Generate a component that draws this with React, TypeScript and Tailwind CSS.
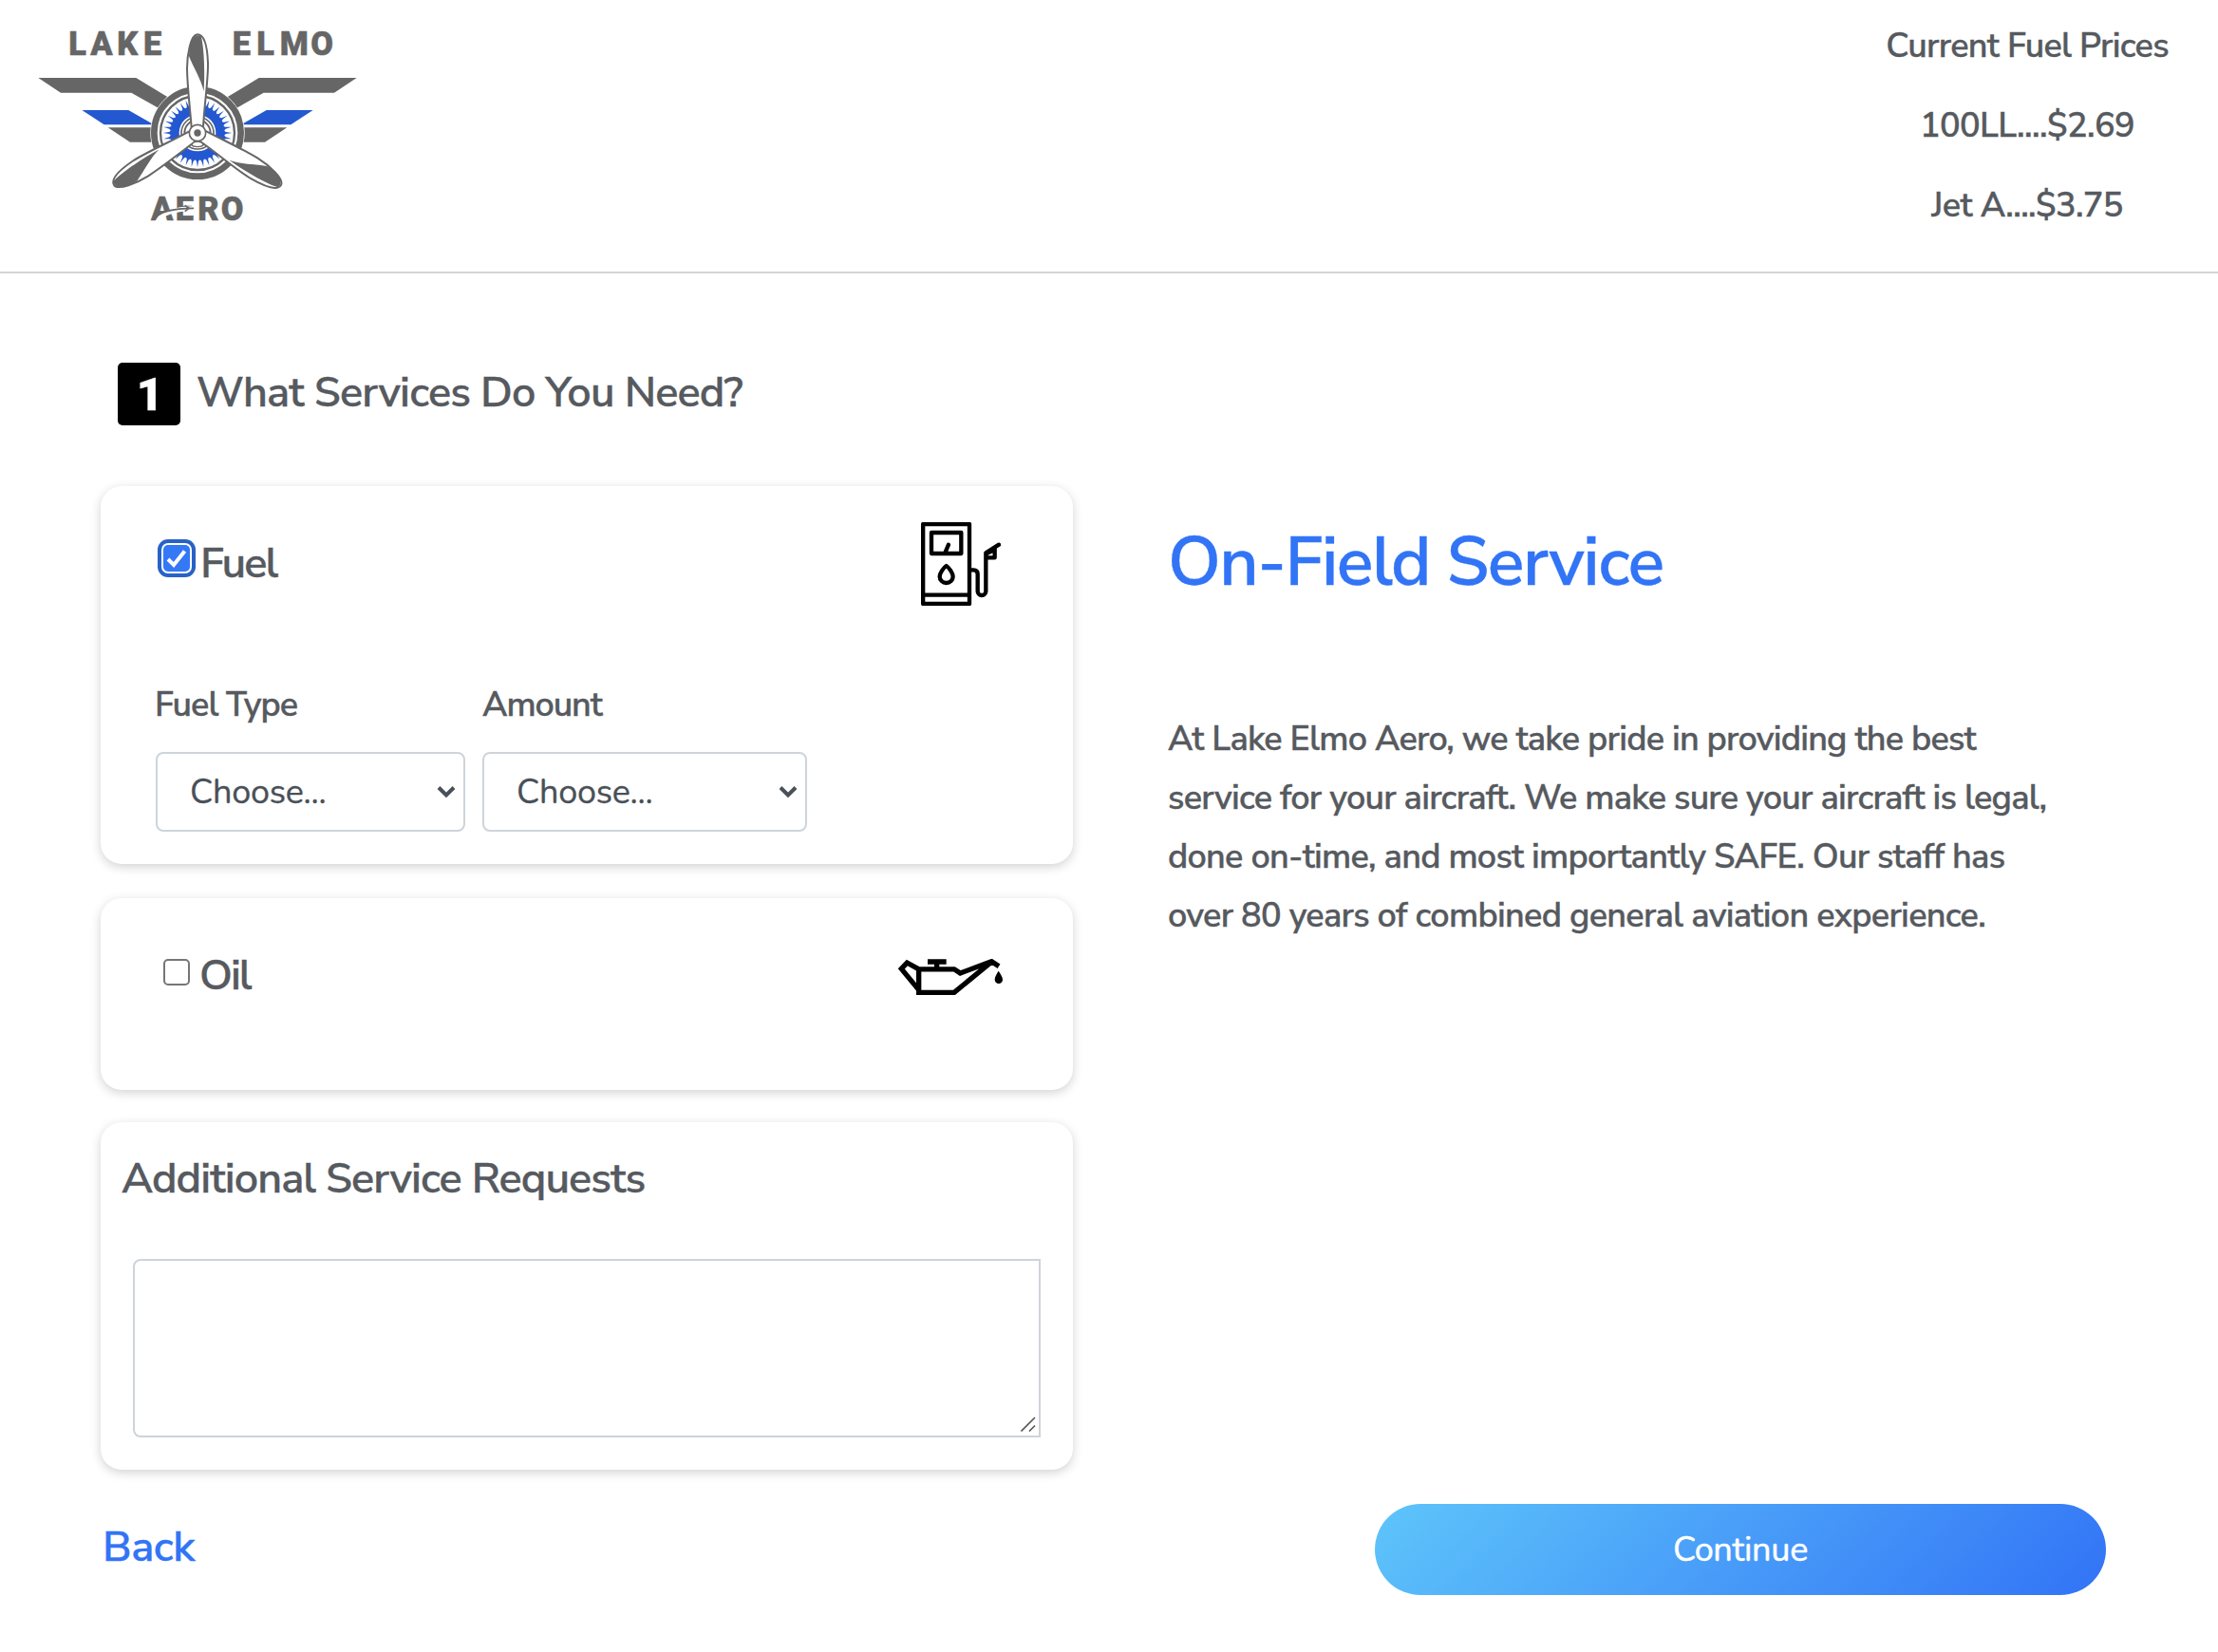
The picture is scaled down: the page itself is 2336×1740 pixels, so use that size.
import React from 'react';

const GRAY = '#666666';
const BLUE = '#2458d0';

const spikes = Array.from({ length: 36 }, (_, i) => i * 10);

function Blade({ angle }: { angle: number }) {
  return (
    <g transform={`rotate(${angle} 564 390)`}>
      <path
        d="M564 79C542 79 531 145 531 186C532 250 541 315 545 372L582 372C585 305 598 225 597 170C595 112 585 79 564 79Z"
        fill="#fff"
        stroke={GRAY}
        strokeWidth="6"
      />
      <path d="M563 82C546 84 538 115 537 148C552 185 576 222 584 259C588 205 585 115 575 84C572 82 567 81 563 82Z" fill={GRAY} />
    </g>
  );
}

function Wing() {
  return (
    <>
      <path d="M61 216H370L470 277L443 313L355 263H132Z" fill={GRAY} />
      <path d="M199 318H346L426 364H269Z" fill={BLUE} />
      <path d="M281 373H430V419H351Z" fill={GRAY} />
    </>
  );
}

function Logo() {
  return (
    <svg viewBox="0 0 1140 750" className="h-[250px] w-[380px]" aria-label="Lake Elmo Aero">
      <g fill={GRAY} stroke={GRAY} strokeWidth="1.5" fontFamily="Roboto, 'Liberation Sans', sans-serif" fontWeight="900" fontSize="103">
        <text x="157 226 310 393" y="145">LAKE</text>
        <text x="674 751 824 922" y="145">ELMO</text>
        <text x="417 494 565 638" y="665">AERO</text>
      </g>
      <path d="M436 672C448 646 480 630 556 628" fill="none" stroke="#fff" strokeWidth="14" />
      <path d="M424 664C440 642 474 628 552 628M524 619L538 628L524 638" fill="none" stroke={GRAY} strokeWidth="5" />
      <Wing />
      <g transform="translate(1128 0) scale(-1 1)">
        <Wing />
      </g>
      <circle cx="564" cy="390" r="149" fill="#fff" />
      <circle cx="564" cy="390" r="137" fill="#fff" stroke={GRAY} strokeWidth="20" />
      <circle cx="564" cy="390" r="117" fill="none" stroke={GRAY} strokeWidth="7" />
      {spikes.map((a) => (
        <path key={a} d="M557 306L561 300L564 281L567 300L571 306Z" fill={BLUE} transform={`rotate(${a} 564 390)`} />
      ))}
      <circle cx="564" cy="390" r="72" fill="none" stroke={BLUE} strokeWidth="28" />
      <circle cx="564" cy="390" r="51" fill="#fff" stroke={GRAY} strokeWidth="5" />
      <circle cx="564" cy="390" r="41" fill="none" stroke={GRAY} strokeWidth="6" />
      <Blade angle={0} />
      <Blade angle={122} />
      <Blade angle={238} />
      <path d="M545 428C552 414 576 414 583 428C576 436 552 436 545 428Z" fill="#fff" stroke={GRAY} strokeWidth="4" />
      <circle cx="564" cy="390" r="26" fill="#fff" stroke={GRAY} strokeWidth="5" />
      <circle cx="564" cy="390" r="11" fill={GRAY} />
    </svg>
  );
}

function FuelPumpIcon() {
  return (
    <svg viewBox="150 150 252 264" className="h-[88px] w-[84px]" fill="none" stroke="#000" strokeWidth="13" strokeLinejoin="round" strokeLinecap="round">
      <path d="M156.500 156H303V408H156.500ZM156.500 380H303" />
      <path d="M183 183H277V249H183ZM237 221L226 247" />
      <path d="M230 288C222 293 209 311 209 322A21 20 0 0 0 251 322C251 311 238 293 230 288Z" />
      <path d="M305 301H316Q329 301 329 314V368A13 13 0 0 0 355 368V247L396 221M383 231V262H358M358 249L380 238" />
    </svg>
  );
}

function OilCanIcon() {
  return (
    <svg viewBox="138 390 330 114" className="h-[38px] w-[110px]" fill="none" stroke="#000" strokeWidth="16">
      <path d="M203 422.500L166 402L148 421L203 488M203 415V496H315L432 400M196 422.500H315L334 435L433 398L456 413" />
      <path d="M231 399H290M260 399V420" />
      <path d="M455 428C460 436 468 446 468 455A12.500 13 0 0 1 443 455C443 446 450 436 455 428Z" fill="#000" stroke="none" />
    </svg>
  );
}

function Checkbox({ checked }: { checked?: boolean }) {
  if (checked) {
    return (
      <span role="checkbox" aria-checked="true" className="mt-[7px] block size-7 rounded-[5px] bg-[#3478f6] shadow-[0_0_0_2px_#fff,0_0_0_6px_#2862c6]">
        <svg viewBox="0 0 28 28" className="size-7" fill="none" stroke="#fff" strokeWidth="4">
          <path d="M5 15L11 21L22.500 6.500" />
        </svg>
      </span>
    );
  }
  return <span role="checkbox" aria-checked="false" className="mt-[9px] block size-7 rounded-[5px] border-2 border-[#767676] bg-white" />;
}

function Card({ className, children }: { className: string; children: React.ReactNode }) {
  return <section className={`rounded-[22px] bg-white shadow-[0_3px_11px_rgba(0,0,0,0.18)] ${className}`}>{children}</section>;
}

function SelectField({ label, width, spacing }: { label: string; width: string; spacing: string }) {
  return (
    <div className={width}>
      <label className={`mb-[22px] block text-[36px] leading-[54px] font-semibold ${spacing}`}>{label}</label>
      <div className="flex h-[84px] items-center justify-between rounded-lg border-2 border-[#ced4da] bg-white pr-2 pl-[34px] font-['Nunito','Lato',sans-serif] text-[36px] font-normal tracking-[-0.26px] text-[#495057]">
        <span className="pt-[2px] [-webkit-text-stroke:0.3px_#495057]">Choose...</span>
        <svg viewBox="0 0 20 14" className="h-[14px] w-5" fill="none" stroke="#495057" strokeWidth="4">
          <path d="M2 2.500L10 10.500L18 2.500" />
        </svg>
      </div>
    </div>
  );
}

export default function App() {
  return (
    <div className="h-[1740px] w-[2336px] overflow-hidden bg-white font-['Nunito_Sans','Lato',sans-serif] text-[#565a5f] [-webkit-text-stroke:0.3px_currentColor]">
      <header className="flex h-[288px] items-start justify-between border-b-2 border-[#d2d4d6] pt-[7px] pl-5">
        <div className="pt-[3px]">
          <Logo />
        </div>
        <div className="w-[402px] text-center text-[36px] leading-[84px] font-semibold">
          <p className="tracking-[-0.73px]">Current Fuel Prices</p>
          <p className="tracking-[-0.57px]">100LL....$2.69</p>
          <p className="tracking-[-0.63px]">Jet A....$3.75</p>
        </div>
      </header>

      <main className="pt-[94px] pr-[118px] pl-[106px]">
        <div className="flex h-[66px] items-center pl-[18px]">
          <span className="flex size-[66px] items-center justify-center rounded-[5px] bg-black pt-[2px] pl-[2px] font-['Roboto',sans-serif] text-[49px] leading-[64px] font-black text-white">1</span>
          <h2 className="ml-[17px] pb-[2px] text-[45px] leading-[54px] font-semibold tracking-[-0.86px]">What Services Do You Need?</h2>
        </div>

        <div className="mt-16 flex">
          <div className="w-[1024px]">
            <Card className="h-[398px] pt-[38px]">
              <div className="flex h-[88px] items-start justify-between pr-[76px] pl-[66px]">
                <div className="mt-[17px] flex">
                  <Checkbox checked />
                  <span className="ml-[11px] text-[45px] leading-[54px] font-semibold tracking-[-1.9px]">Fuel</span>
                </div>
                <FuelPumpIcon />
              </div>
              <div className="mt-[78px] flex gap-[18px] pl-[58px]">
                <SelectField label="Fuel Type" width="w-[326px]" spacing="-ml-px tracking-[-0.95px]" />
                <SelectField label="Amount" width="w-[342px]" spacing="tracking-[-1.1px]" />
              </div>
            </Card>

            <Card className="mt-9 h-[202px] pt-[55px]">
              <div className="flex items-start justify-between pr-[74px] pl-[66px]">
                <div className="flex">
                  <Checkbox />
                  <span className="ml-[10px] text-[45px] leading-[54px] font-semibold tracking-[-2px]">Oil</span>
                </div>
                <div className="pt-[9px]">
                  <OilCanIcon />
                </div>
              </div>
            </Card>

            <Card className="mt-[34px] h-[366px] pt-[33px]">
              <h3 className="pl-[22px] text-[45px] leading-[54px] font-semibold tracking-[-0.95px]">Additional Service Requests</h3>
              <div className="mt-[57px] ml-[34px] flex h-[188px] w-[956px] items-end justify-end rounded-l-lg border-2 border-[#ced4da] pr-[3px] pb-1">
                <svg viewBox="0 0 16 16" className="size-4" fill="none" stroke="#555" strokeWidth="1.600">
                  <path d="M0.500 15.500L15 1M9 15.500L15 9.500" />
                </svg>
              </div>
            </Card>
          </div>

          <div className="ml-[100px] pt-[37px]">
            <h1 className="text-[72px] leading-[86px] font-semibold tracking-[-1.54px] text-[#3274f6]">On-Field Service</h1>
            <p className="mt-[113px] text-[36px] leading-[62px] font-semibold whitespace-nowrap">
              <span className="block tracking-[-0.77px]">At Lake Elmo Aero, we take pride in providing the best</span>
              <span className="block tracking-[-0.75px]">service for your aircraft. We make sure your aircraft is legal,</span>
              <span className="block tracking-[-0.75px]">done on-time, and most importantly SAFE. Our staff has</span>
              <span className="block tracking-[-0.71px]">over 80 years of combined general aviation experience.</span>
            </p>
          </div>
        </div>

        <div className="mt-9 flex h-24 items-center justify-between">
          <a className="pb-1 pl-[2px] text-[45px] leading-[54px] font-semibold tracking-[-0.5px] text-[#3274f6]">Back</a>
          <button className="flex h-24 w-[770px] items-center justify-center rounded-full bg-[linear-gradient(135deg,#5ec5fa_0%,#3273f6_100%)] pt-[2px] font-['Nunito','Lato',sans-serif] text-[36px] font-normal tracking-[-0.3px] text-white [-webkit-text-stroke:0.5px_white]">
            Continue
          </button>
        </div>
      </main>
    </div>
  );
}
